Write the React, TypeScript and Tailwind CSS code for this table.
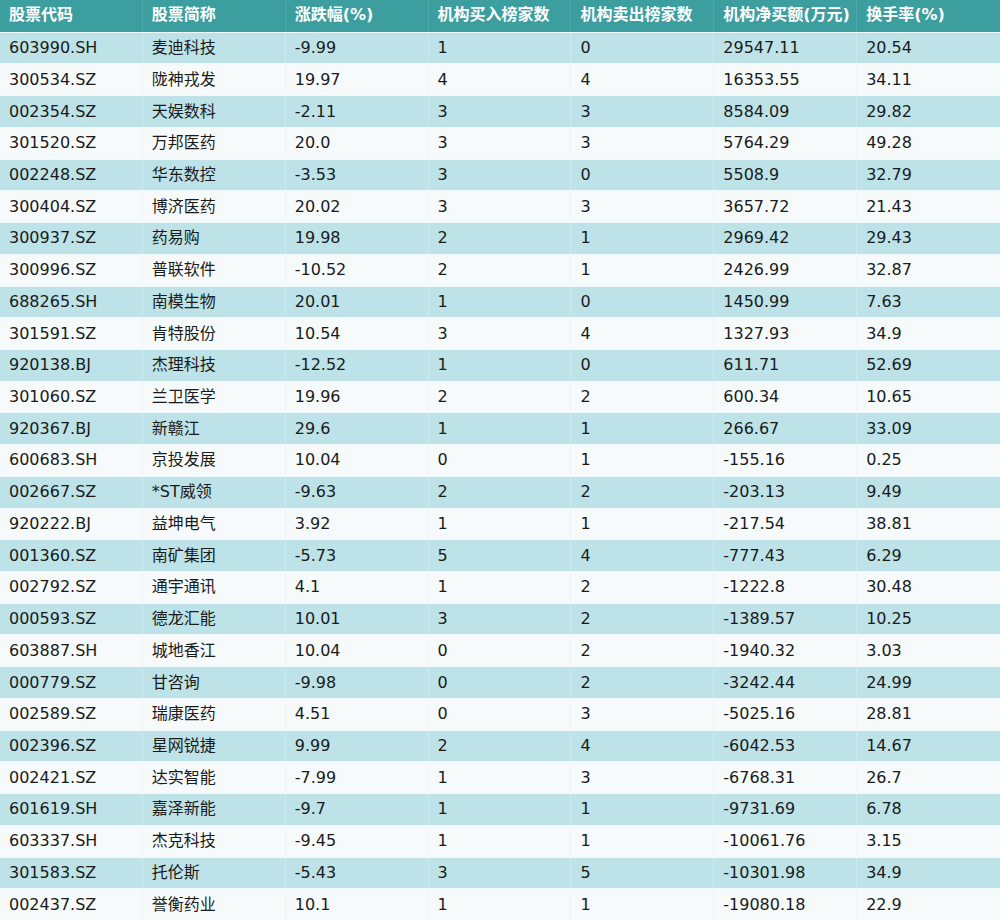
const headers = ['股票代码', '股票简称', '涨跌幅(%)', '机构买入榜家数', '机构卖出榜家数', '机构净买额(万元)', '换手率(%)'];

const rows: string[][] = [
  ['603990.SH', '麦迪科技', '-9.99', '1', '0', '29547.11', '20.54'],
  ['300534.SZ', '陇神戎发', '19.97', '4', '4', '16353.55', '34.11'],
  ['002354.SZ', '天娱数科', '-2.11', '3', '3', '8584.09', '29.82'],
  ['301520.SZ', '万邦医药', '20.0', '3', '3', '5764.29', '49.28'],
  ['002248.SZ', '华东数控', '-3.53', '3', '0', '5508.9', '32.79'],
  ['300404.SZ', '博济医药', '20.02', '3', '3', '3657.72', '21.43'],
  ['300937.SZ', '药易购', '19.98', '2', '1', '2969.42', '29.43'],
  ['300996.SZ', '普联软件', '-10.52', '2', '1', '2426.99', '32.87'],
  ['688265.SH', '南模生物', '20.01', '1', '0', '1450.99', '7.63'],
  ['301591.SZ', '肯特股份', '10.54', '3', '4', '1327.93', '34.9'],
  ['920138.BJ', '杰理科技', '-12.52', '1', '0', '611.71', '52.69'],
  ['301060.SZ', '兰卫医学', '19.96', '2', '2', '600.34', '10.65'],
  ['920367.BJ', '新赣江', '29.6', '1', '1', '266.67', '33.09'],
  ['600683.SH', '京投发展', '10.04', '0', '1', '-155.16', '0.25'],
  ['002667.SZ', '*ST威领', '-9.63', '2', '2', '-203.13', '9.49'],
  ['920222.BJ', '益坤电气', '3.92', '1', '1', '-217.54', '38.81'],
  ['001360.SZ', '南矿集团', '-5.73', '5', '4', '-777.43', '6.29'],
  ['002792.SZ', '通宇通讯', '4.1', '1', '2', '-1222.8', '30.48'],
  ['000593.SZ', '德龙汇能', '10.01', '3', '2', '-1389.57', '10.25'],
  ['603887.SH', '城地香江', '10.04', '0', '2', '-1940.32', '3.03'],
  ['000779.SZ', '甘咨询', '-9.98', '0', '2', '-3242.44', '24.99'],
  ['002589.SZ', '瑞康医药', '4.51', '0', '3', '-5025.16', '28.81'],
  ['002396.SZ', '星网锐捷', '9.99', '2', '4', '-6042.53', '14.67'],
  ['002421.SZ', '达实智能', '-7.99', '1', '3', '-6768.31', '26.7'],
  ['601619.SH', '嘉泽新能', '-9.7', '1', '1', '-9731.69', '6.78'],
  ['603337.SH', '杰克科技', '-9.45', '1', '1', '-10061.76', '3.15'],
  ['301583.SZ', '托伦斯', '-5.43', '3', '5', '-10301.98', '34.9'],
  ['002437.SZ', '誉衡药业', '10.1', '1', '1', '-19080.18', '22.9'],
];

function App() {
  return (
    <div
      className="w-[1000px] h-[920px] grid grid-rows-[repeat(29,1fr)] bg-white text-[16px] leading-none"
      style={{ fontFamily: '"DejaVu Sans", "Noto Sans CJK SC", sans-serif' }}
    >
      {/* Header */}
      <div className="grid grid-cols-7 bg-[#3c9e9f] text-white font-bold">
        {headers.map((h, i) => (
          <div key={i} className="flex items-center pl-[9px] pb-[2px] border-r border-[#4ea7a8] last:border-r-0">
            {h}
          </div>
        ))}
      </div>

      {/* Rows */}
      {rows.map((r, ri) => (
        <div
          key={ri}
          className={`grid grid-cols-7 text-[#1a1a1a] border-t border-[#eef7f9] ${ri % 2 === 0 ? 'bg-[#bde3e8]' : 'bg-[#f6fafb]'}`}
        >
          {r.map((c, ci) => (
            <div
              key={ci}
              className={`flex items-center pl-[9px] border-r last:border-r-0 ${ri % 2 === 0 ? 'border-[#cdeaee]' : 'border-[#eef5f7]'}`}
            >
              {c}
            </div>
          ))}
        </div>
      ))}
    </div>
  );
}

export default App;
